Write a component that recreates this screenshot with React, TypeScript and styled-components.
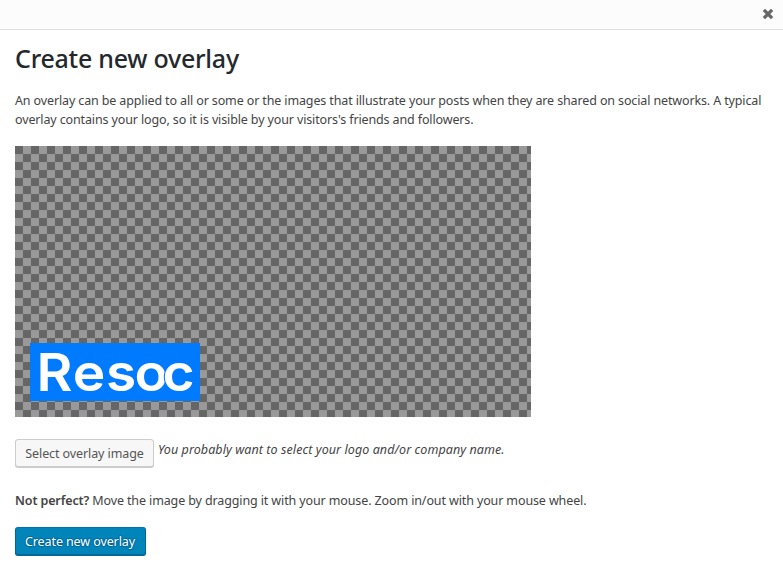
import React from 'react';
import styled, { createGlobalStyle } from 'styled-components';

const GlobalStyle = createGlobalStyle`
  *, *::before, *::after { box-sizing: border-box; }
  body {
    margin: 0;
    background: #fff;
    color: #444;
    font: 12.5px/19px "Segoe UI", "Noto Sans", "Open Sans", sans-serif;
  }
`;

const TitleBar = styled.header`
  display: flex;
  justify-content: flex-end;
  height: 30px;
  background: #fcfcfc;
  border-bottom: 1px solid #ddd;
`;

const CloseButton = styled.button`
  display: flex;
  align-items: center;
  justify-content: center;
  width: 30px;
  height: 28px;
  padding: 0;
  border: 0;
  background: none;
`;

const Content = styled.main`
  padding: 12px 15px 0;
`;

const Heading = styled.h1`
  margin: 0 0 17px;
  color: #23282d;
  font-size: 25px;
  font-weight: 500;
  line-height: 32px;
  letter-spacing: -0.25px;
`;

const Line = styled.span<{ $spacing: number }>`
  display: block;
  white-space: nowrap;
  letter-spacing: ${({ $spacing }) => $spacing}px;
`;

const Intro = styled.p`
  margin: 0 0 17px;
`;

const Canvas = styled.div`
  display: flex;
  align-items: flex-end;
  width: 516px;
  height: 271px;
  padding: 0 0 16px 15px;
  background: repeating-conic-gradient(#999 0 25%, #666 0 50%) 0 0 / 16px 16px;
`;

const Logo = styled.svg`
  display: block;
  width: 170px;
  height: 58px;
  overflow: visible;
`;

const SelectRow = styled.div`
  display: flex;
  margin-top: 22px;
  height: 30px;
`;

const Button = styled.button<{ $primary?: boolean }>`
  height: ${({ $primary }) => ($primary ? 29 : 28)}px;
  width: ${({ $primary }) => ($primary ? 131 : 139)}px;
  padding: ${({ $primary }) => ($primary ? '0 1px 1px 0' : '0')};
  border: 1px solid;
  border-color: ${({ $primary }) => ($primary ? '#0073aa #006799 #006799' : '#ccc')};
  border-radius: 3px;
  background: ${({ $primary }) => ($primary ? '#0085ba' : '#f7f7f7')};
  box-shadow: ${({ $primary }) => ($primary ? 'inset 0 -1px 0 #006799' : '0 1px 0 #ccc')};
  color: ${({ $primary }) => ($primary ? '#fff' : '#555')};
  text-shadow: ${({ $primary }) => ($primary ? '0 -1px 1px #006799, 1px 0 1px #006799, 0 1px 1px #006799, -1px 0 1px #006799' : 'none')};
  font: inherit;
  white-space: nowrap;
`;

const Hint = styled.em`
  margin: 1px 0 0 4px;
`;

const Help = styled.p`
  margin: 22px 0 17px;
`;

const Strong = styled.strong`
  font-weight: 600;
`;

export default function App() {
  return (
    <>
      <GlobalStyle />
      <TitleBar>
        <CloseButton aria-label="Close">
          <svg width="12" height="12" viewBox="0 0 12 12">
            <path d="M1.9 1.9L10.1 10.1M10.1 1.9L1.9 10.1" stroke="#666" strokeWidth="3.3" />
          </svg>
        </CloseButton>
      </TitleBar>
      <Content>
        <Heading>Create new overlay</Heading>
        <Intro>
          <Line $spacing={-0.13}>An overlay can be applied to all or some or the images that illustrate your posts when they are shared on social networks. A typical</Line>
          <Line $spacing={-0.13}>overlay contains your logo, so it is visible by your visitors's friends and followers.</Line>
        </Intro>
        <Canvas>
          <Logo viewBox="0 0 170 58">
            <rect width="170" height="58" fill="#007bff" />
            <text
              x="6.2 40.4 71.7 98.7 124.9"
              y="48"
              transform="scale(1.06 1)"
              fill="#fff"
              fontFamily="Inter, sans-serif"
              fontWeight="600"
              fontSize="52"
            >
              Reso<tspan stroke="#007bff" strokeWidth="2" paintOrder="stroke">c</tspan>
            </text>
          </Logo>
        </Canvas>
        <SelectRow>
          <Button><Line $spacing={-0.1}>Select overlay image</Line></Button>
          <Hint><Line $spacing={0.08}>You probably want to select your logo and/or company name.</Line></Hint>
        </SelectRow>
        <Help>
          <Line $spacing={-0.12}><Strong>Not perfect?</Strong> Move the image by dragging it with your mouse. Zoom in/out with your mouse wheel.</Line>
        </Help>
        <Button $primary><Line $spacing={-0.1}>Create new overlay</Line></Button>
      </Content>
    </>
  );
}
